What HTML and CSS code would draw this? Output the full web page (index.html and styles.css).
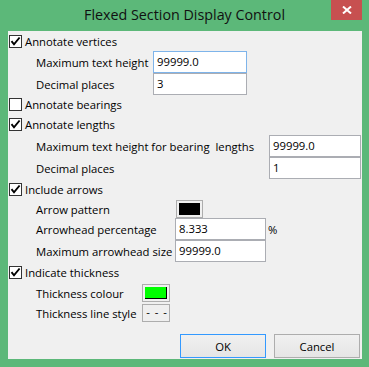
FILE: index.html
```html
<!DOCTYPE html>
<html lang="en">
<head>
    <meta charset="UTF-8">
    <title>Flexed Section Display Control</title>
    <link rel="stylesheet" href="styles.css">
</head>
<body>
    <div class="window">
        <div class="titlebar">
            <span></span>
            <span class="title">Flexed Section Display Control</span>
            <div class="close">
                <svg width="10" height="8" viewBox="0 0 10 8"><path d="M1 0.5 L9 7.5 M9 0.5 L1 7.5" stroke="#fff" stroke-width="2" fill="none"/></svg>
            </div>
        </div>

        <div class="client">
            <!-- Annotate vertices -->
            <div class="check-row gap-4">
                <span class="cb checked"><svg width="11" height="11" viewBox="0 0 11 11"><path d="M1.5 5.2 L4 8.3 L9.6 1.5" stroke="#000" stroke-width="1.9" fill="none"/></svg></span>
                <span>Annotate vertices</span>
            </div>
            <div class="field-row gap-3">
                <span class="label w-117">Maximum text height</span>
                <div class="input focus w-94">99999.0</div>
            </div>
            <div class="field-row">
                <span class="label w-117">Decimal places</span>
                <div class="input w-94">3</div>
            </div>

            <!-- Annotate bearings -->
            <div class="check-row gap-3">
                <span class="cb"></span>
                <span>Annotate bearings</span>
            </div>

            <!-- Annotate lengths -->
            <div class="check-row gap-7">
                <span class="cb checked"><svg width="11" height="11" viewBox="0 0 11 11"><path d="M1.5 5.2 L4 8.3 L9.6 1.5" stroke="#000" stroke-width="1.9" fill="none"/></svg></span>
                <span>Annotate lengths</span>
            </div>
            <div class="field-row gap-4">
                <span class="label w-233">Maximum text height for bearing&nbsp; lengths</span>
                <div class="input w-92">99999.0</div>
            </div>
            <div class="field-row">
                <span class="label w-233">Decimal places</span>
                <div class="input w-92">1</div>
            </div>

            <!-- Include arrows -->
            <div class="check-row gap-4">
                <span class="cb checked"><svg width="11" height="11" viewBox="0 0 11 11"><path d="M1.5 5.2 L4 8.3 L9.6 1.5" stroke="#000" stroke-width="1.9" fill="none"/></svg></span>
                <span>Include arrows</span>
            </div>
            <div class="field-row short gap-4">
                <span class="label w-139">Arrow pattern</span>
                <div class="swatch shift-1"><div class="fill black"></div></div>
            </div>
            <div class="field-row">
                <span class="label w-139">Arrowhead percentage</span>
                <div class="input w-91">8.333</div>
                <span class="unit">%</span>
            </div>
            <div class="field-row">
                <span class="label w-139">Maximum arrowhead size</span>
                <div class="input w-91">99999.0</div>
            </div>

            <!-- Indicate thickness -->
            <div class="check-row gap-4">
                <span class="cb checked"><svg width="11" height="11" viewBox="0 0 11 11"><path d="M1.5 5.2 L4 8.3 L9.6 1.5" stroke="#000" stroke-width="1.9" fill="none"/></svg></span>
                <span>Indicate thickness</span>
            </div>
            <div class="field-row short gap-5">
                <span class="label w-106">Thickness colour</span>
                <div class="swatch wide"><div class="fill green"></div></div>
            </div>
            <div class="field-row short gap-2">
                <span class="label w-106">Thickness line style</span>
                <div class="swatch wide linestyle">-&nbsp;-&nbsp;-</div>
            </div>

            <div class="buttons">
                <button class="btn default">OK</button>
                <button class="btn">Cancel</button>
            </div>
        </div>
    </div>
</body>
</html>
```

FILE: styles.css
```css
body {
    margin: 0;
    font-family: "Open Sans", sans-serif;
    font-size: 11.3px;
    color: #000;
}
.window {
    width: 369px;
    height: 367px;
    background-color: #5cb879;
    display: flex;
    flex-direction: column;
}
.titlebar {
    height: 31px;
    display: grid;
    grid-template-columns: 38px 1fr 38px;
}
.title {
    text-align: center;
    font-size: 14.3px;
    line-height: 30px;
    color: #111;
}
.close {
    width: 31px;
    height: 20px;
    background-color: #c75050;
    display: flex;
    align-items: center;
    justify-content: center;
}
.client {
    flex: 1;
    margin: 0 7px 8px 8px;
    padding-left: 1px;
    background-color: #f0f0f0;
    display: flex;
    flex-direction: column;
}
.check-row {
    display: flex;
    align-items: center;
    gap: 3px;
    height: 13px;
    white-space: nowrap;
}
.cb {
    width: 13px;
    height: 13px;
    box-sizing: border-box;
    border: 1px solid #333;
    background-color: #fff;
    display: flex;
}
.field-row {
    display: flex;
    align-items: center;
    height: 22px;
    padding-left: 27px;
    white-space: nowrap;
}
.field-row.short {
    height: 18px;
}
.gap-2 { margin-top: 2px; }
.gap-3 { margin-top: 3px; }
.gap-4 { margin-top: 4px; }
.gap-5 { margin-top: 5px; }
.gap-7 { margin-top: 7px; }
.w-106 { width: 106px; }
.w-117 { width: 117px; }
.w-139 { width: 139px; }
.w-233 { width: 233px; }
.w-91 { width: 91px; }
.w-92 { width: 92px; }
.w-94 { width: 94px; }
.label {
    flex: none;
}
.input {
    height: 22px;
    box-sizing: border-box;
    border: 1px solid #abadb3;
    background-color: #fff;
    padding: 0 3px;
    line-height: 20px;
}
.input.focus {
    border-color: #7eb4ea;
}
.unit {
    margin-left: 2px;
}
.swatch {
    width: 27px;
    height: 18px;
    box-sizing: border-box;
    border: 1px solid #adadad;
    background-color: #f0f0f0;
    padding: 2px;
}
.swatch.wide {
    width: 28px;
}
.shift-1 {
    margin-left: 1px;
}
.fill {
    height: 100%;
    box-sizing: border-box;
}
.fill.black {
    background-color: #000;
}
.fill.green {
    background-color: #00ff00;
    border-right: 1px solid #000;
    border-bottom: 1px solid #000;
}
.linestyle {
    background-color: #efefef;
    padding: 0 1px 0 0;
    text-align: right;
    line-height: 14px;
    letter-spacing: 1px;
    overflow: hidden;
}
.buttons {
    margin-top: 12px;
    display: flex;
    justify-content: flex-end;
    gap: 8px;
    padding-right: 2px;
}
.btn {
    width: 86px;
    height: 24px;
    border: 1px solid #adadad;
    background: linear-gradient(#f0f0f0, #e5e5e5);
    font-family: inherit;
    font-size: 11.3px;
    color: #000;
    padding: 0;
}
.btn.default {
    border-color: #3399ff;
}
```
